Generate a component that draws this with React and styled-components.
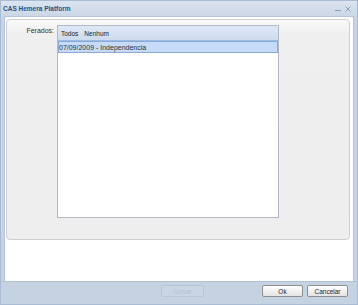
import styled, { createGlobalStyle } from 'styled-components';

const GlobalStyle = createGlobalStyle`
    html, body {
        margin: 0;
        padding: 0;
        width: 358px;
        height: 305px;
        overflow: hidden;
        font-family: "Liberation Sans", Arial, sans-serif;
    }
`;

const Window = styled.div`
    width: 358px;
    height: 305px;
    display: flex;
    flex-direction: column;
    background: #c7d4e4;
    box-sizing: border-box;
    border: 1px solid #a9bcd4;
`;

const TitleBar = styled.div`
    height: 15px;
    display: flex;
    align-items: center;
    justify-content: space-between;
    padding: 0 6px 0 2px;
    background: linear-gradient(#dbe4ef, #cbd7e6);
`;

const Title = styled.span`
    font-size: 6.5px;
    font-weight: bold;
    color: #2b4f86;
`;

const Tools = styled.div`
    display: flex;
    gap: 4px;
    align-items: center;
`;

const Body = styled.div`
    flex: 1;
    margin: 0 3px;
    background: #fff;
    padding: 2px 3px 0 1px;
    border: 1px solid #b5c5d9;
    border-bottom: none;
`;

const Panel = styled.div`
    height: 221px;
    box-sizing: border-box;
    border: 1px solid #cfcfcf;
    border-radius: 4px;
    background: linear-gradient(#fafafa 0px, #efefef 14px, #eeeeee);
    display: flex;
    padding-top: 5px;
`;

const Label = styled.div`
    width: 47px;
    text-align: right;
    padding-right: 3px;
    padding-top: 2px;
    font-size: 7px;
    color: #333;
`;

const ListBox = styled.div`
    width: 222px;
    height: 193px;
    box-sizing: border-box;
    border: 1px solid #b5b8c8;
    background: #fff;
    display: flex;
    flex-direction: column;
`;

const ListToolbar = styled.div`
    height: 14px;
    display: flex;
    align-items: center;
    gap: 6px;
    padding-left: 3px;
    background: linear-gradient(#dfe8f6, #cddbee);
    border-bottom: 1px solid #99bbe8;
`;

const ToolLink = styled.span`
    font-size: 6.5px;
    color: #222;
`;

const ListRow = styled.div`
    height: 10px;
    display: flex;
    align-items: center;
    padding-left: 0;
    font-size: 7px;
    color: #333;
    background: ${p => (p.$selected ? '#c5dbf7' : '#fff')};
    border: 1px solid ${p => (p.$selected ? '#8ea9cf' : 'transparent')};
`;

const Footer = styled.div`
    height: 23px;
    display: flex;
    align-items: flex-start;
    padding: 3px 8px 0 160px;
    box-sizing: border-box;
    background: #c5d2e2;
    border-top: 1px solid #b0c1d6;
`;

const Button = styled.button`
    height: 12px;
    width: ${p => p.$w}px;
    margin-right: ${p => p.$gap || 0}px;
    padding: 0;
    border: 1px solid ${p => (p.disabled ? '#b9c6d6' : '#8f8f8f')};
    border-radius: 2px;
    background: ${p => (p.disabled ? '#c9d5e4' : 'linear-gradient(#ffffff, #e3e3e3)')};
    font-family: "Liberation Sans", Arial, sans-serif;
    font-size: 6.5px;
    color: ${p => (p.disabled ? '#b6c2d2' : '#222')};
`;

export default function App() {
    return (
        <>
            <GlobalStyle />
            <Window>
                <TitleBar>
                    <Title>CAS Hemera Platform</Title>
                    <Tools>
                        <svg width="6" height="6" viewBox="0 0 6 6">
                            <path d="M0 4.5h6" stroke="#8f9fb5" strokeWidth="1.1" />
                        </svg>
                        <svg width="6" height="6" viewBox="0 0 6 6">
                            <path d="M0.5 0.5l5 5M5.5 0.5l-5 5" stroke="#8f9fb5" strokeWidth="1" />
                        </svg>
                    </Tools>
                </TitleBar>
                <Body>
                    <Panel>
                        <Label>Ferados:</Label>
                        <ListBox>
                            <ListToolbar>
                                <ToolLink>Todos</ToolLink>
                                <ToolLink>Nenhum</ToolLink>
                            </ListToolbar>
                            <ListRow $selected>07/09/2009 - Independencia</ListRow>
                        </ListBox>
                    </Panel>
                </Body>
                <Footer>
                    <Button disabled $w={43} $gap={58}>Salvar</Button>
                    <Button $w={41} $gap={4}>Ok</Button>
                    <Button $w={41}>Cancelar</Button>
                </Footer>
            </Window>
        </>
    );
}
